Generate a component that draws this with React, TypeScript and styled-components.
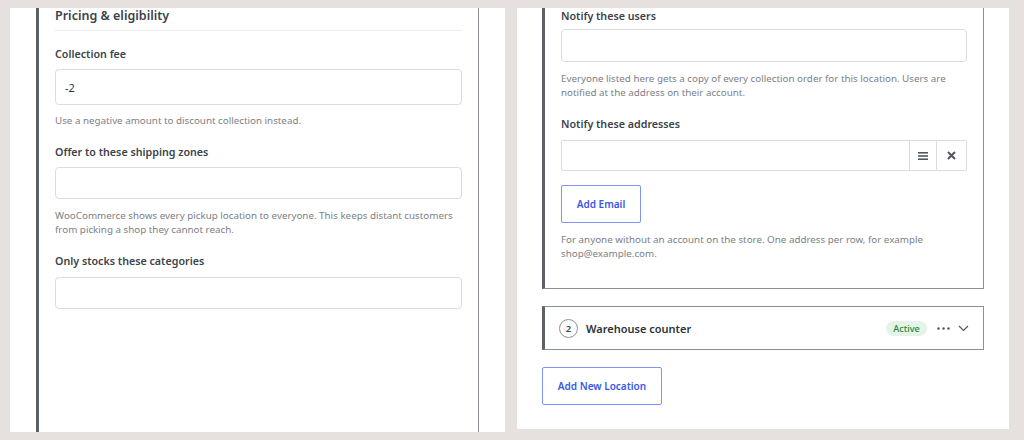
import React from "react";
import styled, { createGlobalStyle } from "styled-components";

const Global = createGlobalStyle`
  html, body { margin: 0; padding: 0; }
  body {
    background: #e6e1df;
    font-family: "Noto Sans", "Open Sans", sans-serif;
    -webkit-font-smoothing: antialiased;
  }
  * { box-sizing: border-box; }
`;

const Page = styled.div`
  display: grid;
  grid-template-columns: 495px 492px;
  column-gap: 12px;
  align-items: start;
  padding: 8px 0 0 10px;
  height: 440px;
  overflow: hidden;
`;

const Panel = styled.section<{ $h: number; $pad: number }>`
  background: #fff;
  height: ${(p) => p.$h}px;
  padding: 0 ${(p) => p.$pad}px;
  overflow: hidden;
  display: flex;
  flex-direction: column;
`;

const Card = styled.div<{ $fill?: boolean }>`
  border: 1px solid #8c8f94;
  border-top: none;
  border-left: 3px solid #5c6166;
  ${(p) => (p.$fill ? "border-bottom: none; flex: 1;" : "")}
  padding: 0 16px 27px 16px;
  display: flex;
  flex-direction: column;
`;

const SectionTitle = styled.h3`
  margin: 0;
  font-size: 12.5px;
  line-height: 16px;
  font-weight: 600;
  color: #3c434a;
  padding: 0 0 6px 0;
  border-bottom: 1px solid #ededee;
`;

const Label = styled.label<{ $top: number }>`
  display: block;
  margin-top: ${(p) => p.$top}px;
  font-size: 10.7px;
  line-height: 16px;
  font-weight: 600;
  color: #3c434a;
`;

const Input = styled.input<{ $h: number; $mt?: number }>`
  display: block;
  width: 100%;
  height: ${(p) => p.$h}px;
  margin-top: ${(p) => p.$mt ?? 7}px;
  border: 1px solid #dcdcde;
  border-radius: 4px;
  padding: 0 9px;
  font-family: inherit;
  font-size: 11px;
  color: #2c3338;
  background: #fff;
  outline: none;
`;

const Help = styled.p<{ $top: number }>`
  margin: ${(p) => p.$top}px 0 0 0;
  font-size: 9.8px;
  line-height: 14px;
  color: #7d8186;
`;

const AddressRow = styled.div`
  display: flex;
  height: 31px;
  margin-top: 8px;
  border: 1px solid #dcdcde;
  border-radius: 2px;
`;

const AddressField = styled.input`
  flex: 1;
  min-width: 0;
  border: none;
  background: transparent;
  outline: none;
  font-family: inherit;
  font-size: 11px;
`;

const CellButton = styled.button<{ $w: number }>`
  width: ${(p) => p.$w}px;
  border: none;
  border-left: 1px solid #dcdcde;
  background: #fff;
  padding: 0;
  display: flex;
  align-items: center;
  justify-content: center;
  color: #50575e;
`;

const OutlineButton = styled.button<{ $w: number; $top: number }>`
  align-self: flex-start;
  width: ${(p) => p.$w}px;
  height: 38px;
  margin-top: ${(p) => p.$top}px;
  border: 1px solid #7f93fb;
  border-radius: 2px;
  background: #fff;
  color: #3858e9;
  font-family: inherit;
  font-size: 10px;
  font-weight: 600;
  padding: 0;
`;

const LocationRow = styled.div`
  margin-top: 17px;
  height: 44px;
  border: 1px solid #8c8f94;
  border-left: 3px solid #5c6166;
  display: flex;
  align-items: center;
  padding: 0 14px 0 14px;
`;

const StepCircle = styled.span`
  width: 19px;
  height: 19px;
  border-radius: 50%;
  border: 1px solid #8c8f94;
  display: flex;
  align-items: center;
  justify-content: center;
  font-size: 9.5px;
  font-weight: 600;
  color: #3c434a;
`;

const LocationName = styled.span`
  margin-left: 8px;
  flex: 1;
  font-size: 11px;
  font-weight: 600;
  color: #2c3338;
`;

const Badge = styled.span`
  height: 15px;
  width: 41px;
  border-radius: 8px;
  background: #e4f4e8;
  color: #2e8540;
  font-size: 9.2px;
  font-weight: 500;
  display: flex;
  align-items: center;
  justify-content: center;
`;

const IconBtn = styled.span<{ $ml: number }>`
  margin-left: ${(p) => p.$ml}px;
  display: flex;
  align-items: center;
  color: #50575e;
`;

const MenuIcon = () => (
  <svg width="10" height="8" viewBox="0 0 10 8">
    <rect x="0" y="0" width="10" height="1.6" fill="currentColor" />
    <rect x="0" y="3.2" width="10" height="1.6" fill="currentColor" />
    <rect x="0" y="6.4" width="10" height="1.6" fill="currentColor" />
  </svg>
);

const CloseIcon = () => (
  <svg width="9" height="9" viewBox="0 0 9 9">
    <path d="M1 1 L8 8 M8 1 L1 8" stroke="currentColor" strokeWidth="2" />
  </svg>
);

const DotsIcon = () => (
  <svg width="13" height="3" viewBox="0 0 13 3">
    <circle cx="1.5" cy="1.5" r="1.2" fill="currentColor" />
    <circle cx="6.5" cy="1.5" r="1.2" fill="currentColor" />
    <circle cx="11.5" cy="1.5" r="1.2" fill="currentColor" />
  </svg>
);

const ChevronIcon = () => (
  <svg width="11" height="7" viewBox="0 0 11 7">
    <path d="M1 1 L5.5 5.5 L10 1" stroke="currentColor" strokeWidth="1.2" fill="none" />
  </svg>
);

export default function App() {
  return (
    <>
      <Global />
      <Page>
        <Panel $h={424} $pad={26}>
          <Card $fill>
            <SectionTitle>Pricing &amp; eligibility</SectionTitle>
            <Label $top={15}>Collection fee</Label>
            <Input $h={36} defaultValue="-2" />
            <Help $top={9}>Use a negative amount to discount collection instead.</Help>
            <Label $top={16}>Offer to these shipping zones</Label>
            <Input $h={32} />
            <Help $top={10}>
              WooCommerce shows every pickup location to everyone. This keeps distant customers from
              picking a shop they cannot reach.
            </Help>
            <Label $top={16}>Only stocks these categories</Label>
            <Input $h={32} $mt={8} />
          </Card>
        </Panel>
        <Panel $h={421} $pad={25}>
          <Card>
            <Label $top={0}>Notify these users</Label>
            <Input $h={33} $mt={5} />
            <Help $top={10}>
              Everyone listed here gets a copy of every collection order for this location. Users are
              notified at the address on their account.
            </Help>
            <Label $top={16}>Notify these addresses</Label>
            <AddressRow>
              <AddressField />
              <CellButton $w={27}>
                <MenuIcon />
              </CellButton>
              <CellButton $w={30}>
                <CloseIcon />
              </CellButton>
            </AddressRow>
            <OutlineButton $w={80} $top={14}>Add Email</OutlineButton>
            <Help $top={10}>
              For anyone without an account on the store. One address per row, for example
              shop@example.com.
            </Help>
          </Card>
          <LocationRow>
            <StepCircle>2</StepCircle>
            <LocationName>Warehouse counter</LocationName>
            <Badge>Active</Badge>
            <IconBtn $ml={10}>
              <DotsIcon />
            </IconBtn>
            <IconBtn $ml={8}>
              <ChevronIcon />
            </IconBtn>
          </LocationRow>
          <OutlineButton $w={120} $top={17}>Add New Location</OutlineButton>
        </Panel>
      </Page>
    </>
  );
}
